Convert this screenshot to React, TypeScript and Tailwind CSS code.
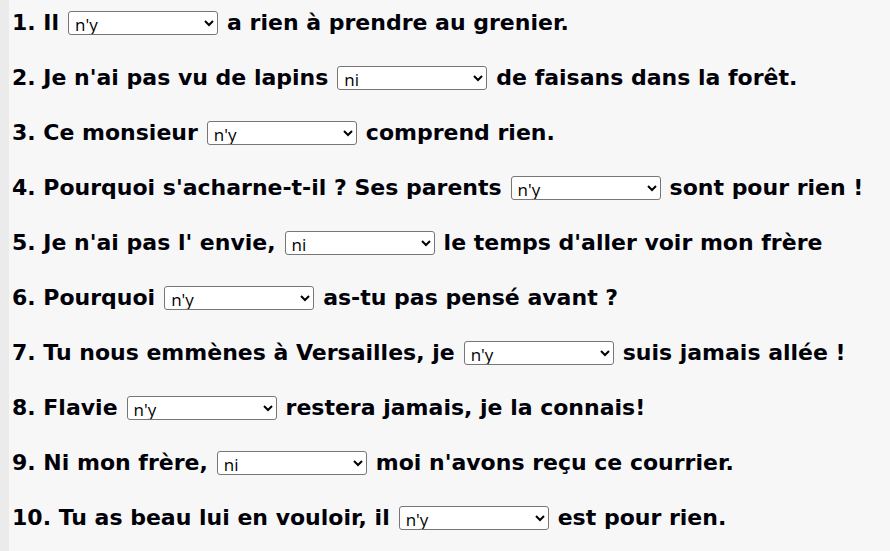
const rows: { n: number; before: string; choice: string; after: string }[] = [
  { n: 1, before: "Il", choice: "n'y", after: "a rien à prendre au grenier." },
  { n: 2, before: "Je n'ai pas vu de lapins", choice: "ni", after: "de faisans dans la forêt." },
  { n: 3, before: "Ce monsieur", choice: "n'y", after: "comprend rien." },
  { n: 4, before: "Pourquoi s'acharne-t-il ? Ses parents", choice: "n'y", after: "sont pour rien !" },
  { n: 5, before: "Je n'ai pas l' envie,", choice: "ni", after: "le temps d'aller voir mon frère" },
  { n: 6, before: "Pourquoi", choice: "n'y", after: "as-tu pas pensé avant ?" },
  { n: 7, before: "Tu nous emmènes à Versailles, je", choice: "n'y", after: "suis jamais allée !" },
  { n: 8, before: "Flavie", choice: "n'y", after: "restera jamais, je la connais!" },
  { n: 9, before: "Ni mon frère,", choice: "ni", after: "moi n'avons reçu ce courrier." },
  { n: 10, before: "Tu as beau lui en vouloir, il", choice: "n'y", after: "est pour rien." },
];

const options = ["n'y", "ni", "n'", "ne"];

function Choice({ value }: { value: string }) {
  return (
    <select
      defaultValue={value}
      className="h-[24px] w-[150px] rounded-[3px] border border-[#767676] bg-white pl-[2px] text-[17px] font-normal text-black [font-family:'Open_Sans',sans-serif]"
    >
      {options.map((o) => (
        <option key={o} value={o}>
          {o}
        </option>
      ))}
    </select>
  );
}

export default function App() {
  return (
    <div className="flex min-h-[551px] w-full bg-[#f7f7f7]">
      <div className="w-[9px] shrink-0 bg-[#ebebeb]" />
      <div className="flex flex-col gap-[31px] pl-[3px] pt-[11px] text-[22px] font-bold text-[#000008] [font-family:'DejaVu_Sans',Verdana,sans-serif]">
        {rows.map((r) => (
          <div key={r.n} className="flex h-[24px] items-center gap-[9px] whitespace-nowrap leading-[24px]">
            <span>
              {r.n}. {r.before}
            </span>
            <Choice value={r.choice} />
            <span>{r.after}</span>
          </div>
        ))}
      </div>
    </div>
  );
}
